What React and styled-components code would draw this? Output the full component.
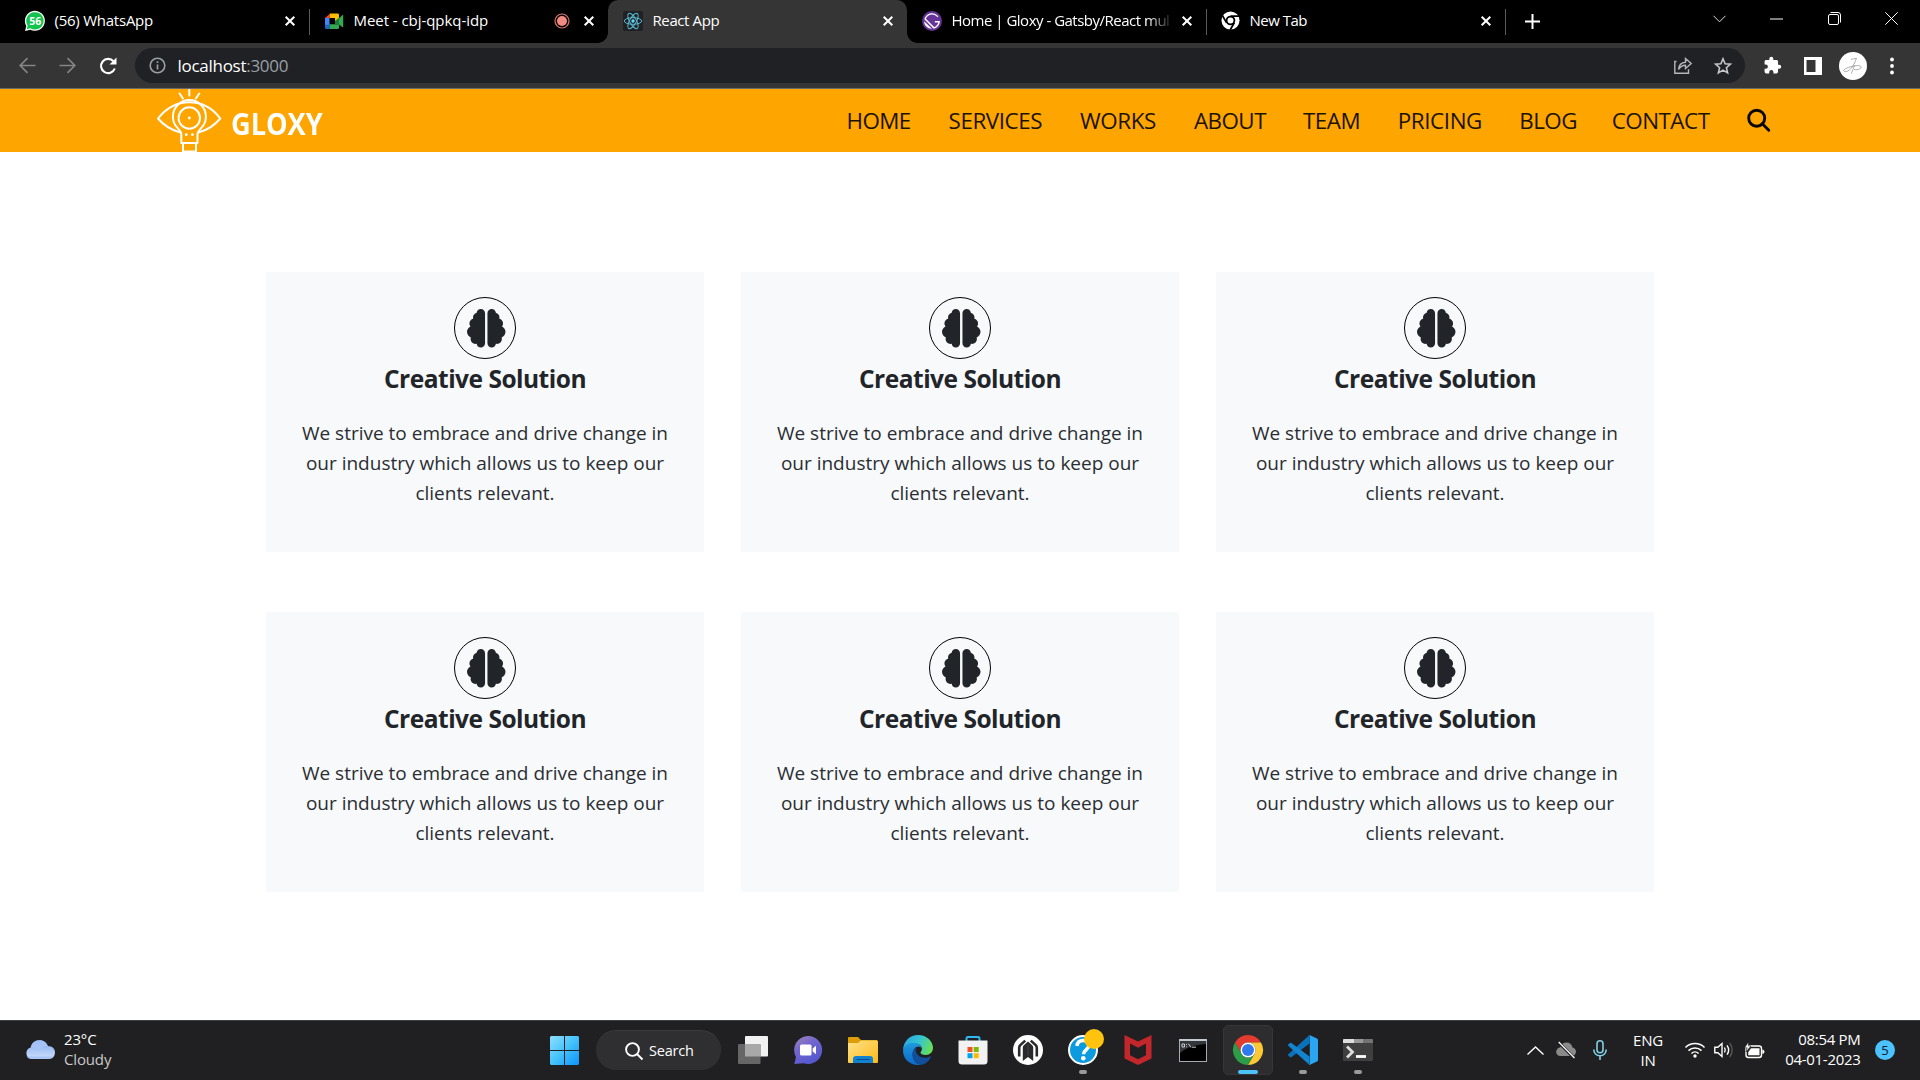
import React from 'react';
import styled, { createGlobalStyle, css } from 'styled-components';
import { FaBrain } from 'react-icons/fa6';

const GlobalStyle = createGlobalStyle`
  *, *::before, *::after { box-sizing: border-box; }
  body { margin: 0; background: #fff; font-family: "Open Sans", "Noto Sans", sans-serif; overflow: hidden; }
  svg { display: block; flex: none; overflow: visible; }
`;

const Screen = styled.div`
  width: 1920px;
  height: 1080px;
  display: flex;
  flex-direction: column;
`;

/* ---------- browser chrome ---------- */

const TabStrip = styled.header`
  display: flex;
  height: 43px;
  padding-left: 10px;
  background: #000;
  color: #fff;
`;

const TabItem = styled.div`
  position: relative;
  display: flex;
  align-items: center;
  width: 299px;
  height: 43px;
  padding: 0 14.5px 2px 15px;
  ${(p) => p.$active && css`
    background: #353535;
    border-radius: 10px 10px 0 0;
    &::before, &::after {
      content: '';
      position: absolute;
      bottom: 0;
      width: 10px;
      height: 10px;
    }
    &::before { left: -10px; background: radial-gradient(circle at 0 0, #000 9.5px, #353535 10px); }
    &::after { right: -10px; background: radial-gradient(circle at 100% 0, #000 9.5px, #353535 10px); }
  `}
  ${(p) => p.$divider && css`
    &::after {
      content: '';
      position: absolute;
      right: -1px;
      top: 9px;
      width: 1px;
      height: 26px;
      background: #5a5a5a;
    }
  `}
`;

const TabTitle = styled.span`
  flex: 1;
  min-width: 0;
  margin: -2px 9px 0 9.5px;
  font-size: 15px;
  line-height: 20px;
  letter-spacing: ${(p) => p.$ls}px;
  white-space: nowrap;
  ${(p) => p.$fade && css`
    mask-image: linear-gradient(90deg, #000 calc(100% - 26px), transparent);
  `}
`;

const TabRecording = styled.span`
  display: flex;
  margin-right: 14px;
`;

const NewTabButton = styled.div`
  display: flex;
  align-items: center;
  justify-content: center;
  width: 54px;
  padding-bottom: 1px;
`;

const WindowButtons = styled.div`
  display: flex;
  align-items: center;
  margin-left: auto;
  padding-bottom: 6px;
  width: 229px;
  justify-content: space-between;
`;

const WindowButton = styled.span`
  display: flex;
  justify-content: center;
  width: 57.25px;
`;

const Toolbar = styled.div`
  display: flex;
  align-items: center;
  height: 46px;
  background: #353535;
  border-bottom: 1px solid #6a6a6a;
`;

const ToolSlot = styled.span`
  display: flex;
  justify-content: center;
  width: ${(p) => p.$w || 40}px;
  flex: none;
`;

const HistoryButtons = styled.div`
  display: flex;
  width: 135px;
  padding-left: 7.5px;
`;

const AddressBar = styled.div`
  display: flex;
  align-items: center;
  width: 1610px;
  height: 35px;
  padding: 0 2.5px 0 14px;
  border-radius: 18px;
  background: #202124;
`;

const Address = styled.span`
  flex: 1;
  margin-left: 11.5px;
  color: #9aa0a6;
  font-size: 17px;
  line-height: 22px;
  letter-spacing: -0.28px;
  b { font-weight: 400; color: #fff; }
`;

const ToolbarActions = styled.div`
  display: flex;
  align-items: center;
  padding-left: 7px;
`;

/* ---------- page ---------- */

const NavBar = styled.nav`
  display: flex;
  height: 63px;
  background: #ffa500;
  overflow: hidden;
`;

const Brand = styled.div`
  display: flex;
  width: 690px;
  margin-left: 155px;
  color: #fff;
`;

const BrandName = styled.span`
  margin: 17px 0 0 8px;
  font-size: 30px;
  line-height: 36px;
  font-weight: 700;
  transform: scaleX(0.905);
  transform-origin: 0 50%;
`;

const NavLinks = styled.div`
  display: flex;
  padding-top: 17px;
  margin-left: 1.5px;
`;

const NavLink = styled.span`
  width: ${(p) => p.$w}px;
  font-size: 22.4px;
  line-height: 30px;
  letter-spacing: ${(p) => p.$ls}px;
  color: #1a1300;
`;

const SearchMark = styled.span`
  display: flex;
  padding-top: 3px;
`;

const Services = styled.main`
  flex: 1;
  display: grid;
  grid-template-columns: repeat(3, 438px);
  grid-auto-rows: 280px;
  gap: 60px 37px;
  align-content: start;
  padding: 120px 0 0 266px;
  background: #fff;
`;

const Card = styled.article`
  display: flex;
  flex-direction: column;
  align-items: center;
  padding-top: 25px;
  background: #f8f9fb;
  color: #212529;
  text-align: center;
`;

const IconRing = styled.div`
  display: flex;
  align-items: center;
  justify-content: center;
  width: 62px;
  height: 62px;
  padding-left: 3px;
  border: 1px solid #000;
  border-radius: 50%;
`;

const CardTitle = styled.h3`
  margin: 4px 0 23px;
  font-size: 24.5px;
  line-height: 32px;
  font-weight: 700;
  letter-spacing: -0.5px;
`;

const CardText = styled.p`
  width: 390px;
  margin: 0;
  font-size: 19px;
  line-height: 30px;
  color: #2a2e32;
`;

/* ---------- taskbar ---------- */

const Taskbar = styled.footer`
  display: flex;
  align-items: center;
  height: 60px;
  border-top: 1px solid #3b3f40;
  background: #202022;
  color: #fff;
  font-size: 15px;
  line-height: 20px;
`;

const Weather = styled.div`
  display: flex;
  align-items: center;
  gap: 9px;
  width: 537px;
  padding: 0 0 2px 25px;
`;

const TwoLines = styled.div`
  display: flex;
  flex-direction: column;
  align-items: ${(p) => p.$align || 'flex-start'};
  width: ${(p) => (p.$w ? `${p.$w}px` : 'auto')};
  margin-top: ${(p) => p.$up ?? -2}px;
  letter-spacing: ${(p) => p.$ls || -0.15}px;
`;

const Muted = styled.span`
  color: #c8c8c8;
`;

const SearchPill = styled.div`
  display: flex;
  align-items: center;
  width: 125px;
  height: 40px;
  margin: 0 4px 1px 4px;
  padding-left: 29px;
  gap: 6px;
  border-radius: 20px;
  background: #2f2f31;
  border-top: 1px solid #3b3b3d;
  font-size: 14.5px;
  letter-spacing: -0.2px;
`;

const AppSlot = styled.div`
  position: relative;
  display: flex;
  align-items: center;
  justify-content: center;
  width: 55px;
  height: 59px;
  padding-bottom: 1px;
`;

const AppButton = styled.div`
  display: flex;
  align-items: center;
  justify-content: center;
  width: 50px;
  height: 50px;
  border-radius: 5px;
  ${(p) => p.$focused && css`
    background: #2d2d2f;
    border: 1px solid #363638;
  `}
`;

const Running = styled.span`
  position: absolute;
  bottom: 6px;
  left: calc(50% - ${(p) => (p.$focused ? 10 : 4)}px);
  width: ${(p) => (p.$focused ? 20 : 8)}px;
  height: 4px;
  border-radius: 2px;
  background: ${(p) => (p.$focused ? '#4cc2ff' : '#9a9a9a')};
`;

const Tray = styled.div`
  display: flex;
  align-items: center;
  margin-left: auto;
  padding: 0 25px 1px 0;
`;

const TraySlot = styled.span`
  display: flex;
  justify-content: center;
  width: ${(p) => p.$w}px;
`;

const CountBadge = styled.span`
  width: 20px;
  height: 20px;
  margin-left: 14.5px;
  border-radius: 50%;
  background: #4cc2ff;
  color: #10202a;
  font-size: 13px;
  text-align: center;
`;

/* ---------- drawings ---------- */

const Cross = () => (
  <svg width="10" height="10" viewBox="0 0 10 10" stroke="#fff" strokeWidth="2" fill="none"><path d="M.7.7l8.6 8.6M9.3.7L.7 9.3" /></svg>
);

const SvgText = styled.text`
  font: 700 ${(p) => p.$size}px "Open Sans", sans-serif;
  text-anchor: middle;
`;

const WhatsAppIcon = () => (
  <svg width="20" height="20" viewBox="0 0 20 20">
    <path d="M0 20l1.3-5A10 10 0 1 1 5.200 18.700z" fill="#fff" />
    <path d="M1.700 18.300l1-3.600A8.700 8.700 0 1 1 5.400 17.300z" fill="#12c34c" />
    <SvgText x="10.200" y="13.800" $size="10.500" fill="#fff">56</SvgText>
  </svg>
);

const MeetIcon = () => (
  <svg width="20" height="20" viewBox="0 0 20 20">
    <path d="M1 7l5-4.500V7z" fill="#ea4335" />
    <path d="M1 7h4.500v7.500H1z" fill="#4285f4" />
    <path d="M1 13.700h4.500V18H2.200Q1 18 1 16.800z" fill="#1967d2" />
    <path d="M5.500 13.300H15V16.700Q15 18 13.700 18H5.500z" fill="#34a853" />
    <path d="M6 2.500h7.700Q15 2.500 15 3.800V9l-4 1V7H6z" fill="#fbbc04" />
    <path d="M11 10.200l4-3.500V14l-4-.5z" fill="#188038" />
    <path d="M15 7.200L18.500 4q.7-.3.7.5v11.300q0 .8-.7.400L15 13.400z" fill="#34a853" />
  </svg>
);

const ReactIcon = () => (
  <svg width="20" height="20" viewBox="0 0 20 20">
    <rect width="20" height="20" rx="2" fill="#202124" />
    <g fill="none" stroke="#58b9d0" strokeWidth="1">
      <ellipse cx="10" cy="10" rx="8.700" ry="3.300" />
      <ellipse cx="10" cy="10" rx="8.700" ry="3.300" transform="rotate(60 10 10)" />
      <ellipse cx="10" cy="10" rx="8.700" ry="3.300" transform="rotate(120 10 10)" />
    </g>
    <circle cx="10" cy="10" r="1.700" fill="#61dafb" />
  </svg>
);

const GatsbyIcon = () => (
  <svg width="20" height="20" viewBox="0 0 28 28">
    <circle cx="14" cy="14" r="14" fill="#639" />
    <path fill="#fff" d="M6.200 21.800C4.100 19.700 3 16.900 3 14.200L13.900 25c-2.800-.1-5.600-1.100-7.700-3.200zm10.200 2.900L3.300 11.600C4.400 6.700 8.800 3 14 3c3.700 0 6.900 1.800 8.900 4.500l-1.500 1.300C19.700 6.500 17 5 14 5c-3.900 0-7.200 2.500-8.500 6L17 22.500c2.900-1 5.100-3.500 5.800-6.500H18v-2h7c0 5.200-3.700 9.600-8.600 10.700z" />
  </svg>
);

const ChromeMonoIcon = () => (
  <svg width="19" height="19" viewBox="0 0 20 20">
    <circle cx="10" cy="10" r="9.500" fill="#fff" />
    <circle cx="10" cy="10" r="4.100" fill="#fff" stroke="#000" strokeWidth="1.900" />
    <path d="M10 5.300h9M5.900 12.500L1.600 5M14 12.400L9.600 20" stroke="#000" strokeWidth="1.800" />
  </svg>
);

const RecordingIcon = () => (
  <svg width="16" height="16" viewBox="0 0 16 16"><circle cx="8" cy="8" r="5" fill="#f28b82" /><circle cx="8" cy="8" r="7" fill="none" stroke="#d8766d" strokeWidth="1.200" /></svg>
);

const GloxyMark = () => (
  <svg width="68" height="63" viewBox="155 89 68 63" fill="none" stroke="#fff" strokeWidth="2" strokeLinecap="round" strokeLinejoin="round">
    <path d="M189.300 89v6.500M179.600 93.500l3.300 5M199.300 93.500l-3.500 5" />
    <path d="M180.500 132.500c-9-2.300-17-7.500-22.500-14 8-10.200 18.500-16.300 31.300-16.300s23.500 6.100 31 16.300c-5.400 6.500-13 11.700-22 14" />
    <path d="M181.300 143v-8.800c0-2.400-1.400-3.600-3.400-5.800a16.500 16.500 0 1 1 23 0c-2 2.200-3.400 3.400-3.400 5.800v8.800z" />
    <circle cx="189.300" cy="118" r="10.700" />
    <path d="M183 143.500v8h13v-8" />
    <g fill="#fff" stroke="none"><circle cx="189.300" cy="118" r="1.400" /><circle cx="186.200" cy="134.700" r="1.400" /><circle cx="192.400" cy="134.700" r="1.400" /></g>
  </svg>
);

const WeatherIcon = () => (
  <svg width="30" height="19" viewBox="0 0 30 19">
    <defs><linearGradient id="cloud" x1="0" y1="0" x2="0" y2="1"><stop offset="0" stopColor="#7ea9ee" /><stop offset="1" stopColor="#cfdffb" /></linearGradient></defs>
    <path d="M6 19a6 6 0 0 1-.3-11.600C6.600 3 10 0 14.400 0c4.300 0 7.300 2.500 8.400 6.100C27 6 30 8.800 30 12.500S27.300 19 23.700 19z" fill="url(#cloud)" />
    <path d="M5.700 7.400c4-.8 7 .8 8.500 3 1.500-2.400 4.300-4.500 8.600-4.300C21.500 2.500 18.400.5 14.400.5c-4.300 0-7.500 2.600-8.700 6.900z" fill="#a9c6f8" opacity=".8" />
    <path d="M1.500 16.500h27c-1 1.600-2.600 2.500-4.700 2.500H6c-2 0-3.600-1-4.500-2.500z" fill="#92b5f2" opacity=".6" />
  </svg>
);

const StartIcon = () => (
  <svg width="29" height="29" viewBox="0 0 29 29">
    <defs><linearGradient id="start" gradientUnits="userSpaceOnUse" x1="0" y1="0" x2="29" y2="29"><stop offset="0" stopColor="#8ce0fd" /><stop offset=".5" stopColor="#45c2fb" /><stop offset="1" stopColor="#0a93fa" /></linearGradient></defs>
    <path fill="url(#start)" d="M1 0h13v14H0V1zM15 0h13l1 1v13H15zM0 15h14v14H1l-1-1zM15 15h14v13l-1 1H15z" />
  </svg>
);

const SearchIcon = () => (
  <svg width="18" height="18" viewBox="0 0 18 18" fill="none" stroke="#fff" strokeWidth="1.900"><circle cx="7.500" cy="7.500" r="6.400" /><path d="M12 12l5.500 5.500" /></svg>
);

const TaskViewIcon = () => (
  <svg width="30" height="28" viewBox="0 0 30 28">
    <rect x="7" width="23" height="20.500" rx="1" fill="#f1f1f1" />
    <rect y="8" width="22.500" height="20" rx="1" fill="#666" />
    <rect x="7" y="8" width="15.500" height="12.500" fill="#a8a8a8" />
  </svg>
);

const ChatIcon = () => (
  <svg width="28" height="28" viewBox="0 0 28 28">
    <defs><linearGradient id="chat" x1="0" y1="0" x2=".6" y2="1"><stop offset="0" stopColor="#a384b4" /><stop offset=".45" stopColor="#7166cf" /><stop offset="1" stopColor="#5457cf" /></linearGradient></defs>
    <path d="M14 0a14 14 0 1 1-4.500 27.200L.3 28 2 21A14 14 0 0 1 14 0z" fill="url(#chat)" />
    <rect x="6" y="8.500" width="11.500" height="11" rx="1.500" fill="#fff" /><path d="M18.700 12.500l3.300-2.800v8.600l-3.300-2.800z" fill="#fff" />
  </svg>
);

const ExplorerIcon = () => (
  <svg width="30" height="26" viewBox="0 0 30 26">
    <defs><linearGradient id="folder" x1="0" y1="0" x2="1" y2="1"><stop offset="0" stopColor="#ffe08a" /><stop offset="1" stopColor="#fbbb16" /></linearGradient></defs>
    <path d="M0 1q0-1 1-1h9l3 3h16v8H0z" fill="#dd9d08" />
    <path d="M0 6h10l3-2.500h16q1 0 1 1V25q0 1-1 1H1q-1 0-1-1z" fill="url(#folder)" />
    <path d="M5 26v-4q0-3 3-3h14q3 0 3 3v4z" fill="#1181d2" /><path d="M8.500 22.500h13" stroke="#0a4b8b" strokeWidth="1" />
  </svg>
);

const EdgeIcon = () => (
  <svg width="30" height="30" viewBox="0 0 30 30">
    <defs>
      <linearGradient id="edgeTop" x1="0" y1=".3" x2="1" y2=".6"><stop offset="0" stopColor="#2ba7de" /><stop offset=".5" stopColor="#34c4d2" /><stop offset="1" stopColor="#6be052" /></linearGradient>
      <linearGradient id="edgeLow" x1="0" y1="0" x2="0" y2="1"><stop offset="0" stopColor="#2098dd" /><stop offset="1" stopColor="#0b69c7" /></linearGradient>
    </defs>
    <path d="M.1 14.500C.6 6 7 0 15 0c9 0 15 6.500 15 12.800 0 4.200-3.200 7.200-7.200 7.200-3.300 0-5.300-1.100-5.300-2.300 0-1 1.400-1.400 1.400-3.900 0-3-2.700-5-6.400-5C6.500 8.800 2 11 .1 14.500z" fill="url(#edgeTop)" />
    <path d="M.1 14.500C1.500 10.500 5 8 9.500 8c4.700 0 9 2 9.400 5.800-.6-1.600-2-2.300-3.300-2.300-3.300 0-6 3.300-6 8 0 5.500 4 9.700 8.400 10.200C7.500 31.500-.7 24 .1 14.500z" fill="url(#edgeLow)" />
    <path d="M9.600 19.500c0-3.400 1.500-6.300 3.800-7.500-2 3.300.3 10.500 8.100 10.700 2.500 0 4.200-.7 5.500-1.300.7-.3 1 .2.700.8C25.700 26.500 22 29.700 18 29.700c-5-.5-8.400-5-8.400-10.200z" fill="#114f9c" />
  </svg>
);

const StoreIcon = () => (
  <svg width="30" height="30" viewBox="0 0 30 30">
    <path d="M8.500 7V3.500Q8.500 2 10 2h10q1.500 0 1.500 1.500V7" fill="none" stroke="#2fb9f0" strokeWidth="2" />
    <path d="M.5 5.500h29V26q0 3.500-3.500 3.500H4Q.5 29.500.5 26z" fill="#f2f2f2" />
    <path d="M9.500 12h5v5h-5z" fill="#f25022" /><path d="M15.700 12h5v5h-5z" fill="#7fba00" /><path d="M9.500 18.200h5v5h-5z" fill="#00a4ef" /><path d="M15.700 18.200h5v5h-5z" fill="#ffb900" />
  </svg>
);

const RibbonIcon = () => (
  <svg width="30" height="30" viewBox="0 0 30 30">
    <circle cx="15" cy="15" r="15" fill="#fff" />
    <path d="M9.800 26V12.500q0-1.300 1-2.300L15 6.500l4.200 3.700q1 1 1 2.300V26L15 22z" fill="#2a2a2c" />
    <path d="M6.200 21.500v-8.800q0-1.500 1.100-2.600L12.200 5.600M23.800 21.500v-8.800q0-1.500-1.100-2.600L17.800 5.600" fill="none" stroke="#2a2a2c" strokeWidth="2.600" />
    <path d="M15 9.500v11" stroke="#4a4a4c" strokeWidth=".8" />
  </svg>
);

const HelpIcon = () => (
  <svg width="30" height="30" viewBox="0 0 30 30">
    <circle cx="15" cy="15" r="14" fill="#0d9be0" stroke="#fff" strokeWidth="2" />
    <path d="M9 11c.3-4 3.300-5.500 6.200-5.500 3.300 0 5.700 1.800 5.700 4.900 0 4.200-5.400 4.200-5.400 8.800" fill="none" stroke="#fff" strokeWidth="3.500" />
    <circle cx="15.300" cy="23.300" r="2.300" fill="#fff" />
    <circle cx="26" cy="4" r="10" fill="#ffc20e" />
  </svg>
);

const ShieldIcon = () => (
  <svg width="28" height="30" viewBox="0 0 28 30">
    <path d="M.5 0L14 6.500 27.500 0v23.500L14 30 .5 23.500z" fill="#c3262b" />
    <path d="M6 8.500l8 4.200 8-4.200v11.800l-8 4-8-4z" fill="#202022" />
  </svg>
);

const CmdIcon = () => (
  <svg width="28" height="23" viewBox="0 0 28 23">
    <rect x=".5" y=".5" width="27" height="22" fill="#000" stroke="#a7abb3" />
    <path d="M1 1h26v4C16 6 8 8 1 14z" fill="#34363a" /><path d="M.5 1h27" stroke="#c6cad1" strokeWidth="2" />
    <path d="M3 5h2.500v3H3zM7.500 5v1M7.500 7.500v.8M9.500 4.700l2.500 3.800M13 8.200h4" fill="none" stroke="#ddd" strokeWidth=".9" />
  </svg>
);

const ChromeIcon = () => (
  <svg width="30" height="30" viewBox="0 0 30 30">
    <path d="M2 7.500A15 15 0 0 1 28 7.500H15a7.500 7.500 0 0 0-6.500 11.200z" fill="#e33b2e" />
    <path d="M28 7.500A15 15 0 0 1 15 30l6.500-11.300A7.500 7.500 0 0 0 15 7.500z" fill="#fcc934" />
    <path d="M2 7.500l6.500 11.200a7.500 7.500 0 0 0 13 0L15 30A15 15 0 0 1 2 7.500z" fill="#2d9c48" />
    <circle cx="15" cy="15" r="7.500" fill="#fff" /><circle cx="15" cy="15" r="6" fill="#2f7bed" />
  </svg>
);

const CodeIcon = () => (
  <svg width="30" height="30" viewBox="0 0 30 30">
    <path d="M0 19.500L21.500 0v8.500L3.500 22q-.8.600-1.500 0L.2 20.600z" fill="#0a72bd" />
    <path d="M0 10.500L21.500 30v-8.500L3.500 8q-.8-.6-1.500 0L.2 9.400z" fill="#1384cf" />
    <path d="M21.500 0L29 3.500q1 .5 1 1.600v19.800q0 1.100-1 1.600L21.500 30q-.7 0-1.200-.6 1.500.8 1.500-1V1.600q0-1.800-1.500-1z" fill="#2aa5f1" />
  </svg>
);

const TerminalIcon = () => (
  <svg width="30" height="22" viewBox="0 0 30 22">
    <rect width="30" height="22" rx="1" fill="#3f3f3f" />
    <path d="M0 4V1q0-1 1-1h10v4z" fill="#ddd" /><path d="M11 0h9v4h-9z" fill="#999" /><path d="M20 0h9q1 0 1 1v3H20z" fill="#737373" />
    <path d="M4 7.500l5.500 5.500L4 18.500" fill="none" stroke="#ddd" strokeWidth="2.800" /><path d="M13 17.500h10" stroke="#fff" strokeWidth="2.800" />
  </svg>
);

/* ---------- data ---------- */

const tabs = [
  { title: '(56) WhatsApp', ls: -0.24, icon: <WhatsAppIcon />, divider: true },
  { title: 'Meet - cbj-qpkq-idp', ls: -0.05, icon: <MeetIcon />, recording: true },
  { title: 'React App', ls: -0.4, icon: <ReactIcon />, active: true },
  { title: 'Home | Gloxy - Gatsby/React mul', ls: -0.5, icon: <GatsbyIcon />, fade: true, divider: true },
  { title: 'New Tab', ls: -0.5, icon: <ChromeMonoIcon />, divider: true },
];

const links = [
  ['HOME', 102.1, -0.6], ['SERVICES', 131.5, -0.45], ['WORKS', 113.9, -0.45], ['ABOUT', 108.9, -0.55],
  ['TEAM', 94.9, -0.45], ['PRICING', 121.6, -0.4], ['BLOG', 92.3, -0.6], ['CONTACT', 134.9, -0.5],
];

const apps = [
  { icon: <TaskViewIcon /> },
  { icon: <ChatIcon /> },
  { icon: <ExplorerIcon /> },
  { icon: <EdgeIcon /> },
  { icon: <StoreIcon /> },
  { icon: <RibbonIcon /> },
  { icon: <HelpIcon />, running: true },
  { icon: <ShieldIcon /> },
  { icon: <CmdIcon /> },
  { icon: <ChromeIcon />, running: true, focused: true },
  { icon: <CodeIcon />, running: true },
  { icon: <TerminalIcon />, running: true },
];

function Browser() {
  return (
    <>
      <TabStrip>
        {tabs.map((t) => (
          <TabItem key={t.title} $active={t.active} $divider={t.divider}>
            {t.icon}
            <TabTitle $ls={t.ls} $fade={t.fade}>{t.title}</TabTitle>
            {t.recording && <TabRecording><RecordingIcon /></TabRecording>}
            <Cross />
          </TabItem>
        ))}
        <NewTabButton>
          <svg width="15" height="15" viewBox="0 0 15 15" stroke="#fff" strokeWidth="2"><path d="M7.500 0v15M0 7.500h15" /></svg>
        </NewTabButton>
        <WindowButtons>
          <WindowButton><svg width="13" height="8" viewBox="0 0 13 8" fill="none" stroke="#ddd"><path d="M.5.800l6 6 6-6" /></svg></WindowButton>
          <WindowButton><svg width="13" height="2" viewBox="0 0 13 2"><path d="M0 .5h13v1H0z" fill="#fff" /></svg></WindowButton>
          <WindowButton><svg width="13" height="13" viewBox="0 0 13 13" fill="none" stroke="#fff"><rect x=".5" y="2.500" width="10" height="10" rx="1.500" /><path d="M2.500.5h7.500q2.500 0 2.500 2.500v7.500" /></svg></WindowButton>
          <WindowButton><svg width="13" height="13" viewBox="0 0 13 13" stroke="#fff"><path d="M.3.300l12.400 12.400M12.700.300L.3 12.700" /></svg></WindowButton>
        </WindowButtons>
      </TabStrip>
      <Toolbar>
        <HistoryButtons>
          <ToolSlot><svg width="17" height="17" viewBox="0 0 17 17" fill="none" stroke="#858585" strokeWidth="1.700"><path d="M16.500 8.500H1.500M8.500 1.200L1.200 8.500l7.300 7.300" /></svg></ToolSlot>
          <ToolSlot><svg width="17" height="17" viewBox="0 0 17 17" fill="none" stroke="#858585" strokeWidth="1.700"><path d="M.5 8.500h15M8.500 1.200l7.300 7.300-7.300 7.300" /></svg></ToolSlot>
          <ToolSlot><svg width="18" height="18" viewBox="0 0 18 18" fill="none" stroke="#fff" strokeWidth="2.100"><path d="M15.800 11.500A7.100 7.100 0 1 1 14.500 4.300" /><path d="M17.500.5v7h-7z" fill="#fff" stroke="none" /></svg></ToolSlot>
        </HistoryButtons>
        <AddressBar>
          <svg width="17" height="17" viewBox="0 0 17 17"><circle cx="8.500" cy="8.500" r="7.300" fill="none" stroke="#9aa0a6" strokeWidth="1.600" /><path d="M8.500 4.300v1.800M8.500 7.500v5" stroke="#9aa0a6" strokeWidth="1.700" /></svg>
          <Address><b>localhost</b>:3000</Address>
          <ToolSlot>
            <svg width="18" height="17" viewBox="0 0 18 17" fill="none" stroke="#b4b6b9" strokeWidth="1.400"><path d="M2.500 4.500H.8v11.700h13.700v-4" /><path d="M4.500 12.500c.3-4.500 2.800-7 7-7.300V1.500l5.700 5-5.700 5V8.200c-3.200 0-5.300 1.500-7 4.300z" /></svg>
          </ToolSlot>
          <ToolSlot>
            <svg width="18" height="18" viewBox="0 0 18 18" fill="none" stroke="#c4c6c9" strokeWidth="1.600"><path d="M9 1.800l2.100 4.900 5.300.5-4 3.500 1.200 5.200L9 13.100l-4.600 2.800 1.200-5.200-4-3.500 5.300-.5z" /></svg>
          </ToolSlot>
        </AddressBar>
        <ToolbarActions>
          <ToolSlot><svg width="19" height="19" viewBox="0 0 24 24" fill="#fff"><path d="M20.500 11H19V7c0-1.100-.9-2-2-2h-4V3.500a2.500 2.500 0 0 0-5 0V5H4c-1.100 0-2 .9-2 2v3.800h1.500a2.700 2.700 0 0 1 0 5.400H2V20c0 1.100.9 2 2 2h3.800v-1.500a2.700 2.700 0 0 1 5.400 0V22H17c1.100 0 2-.9 2-2v-4h1.500a2.500 2.500 0 0 0 0-5z" /></svg></ToolSlot>
          <ToolSlot $w="41"><svg width="18" height="18" viewBox="0 0 18 18"><path d="M0 0h18v18H0z" fill="#fff" /><path d="M2.500 3h9v12h-9z" fill="#353535" /></svg></ToolSlot>
          <ToolSlot>
            <svg width="28" height="28" viewBox="0 0 28 28"><circle cx="14" cy="14" r="14" fill="#fff" /><path d="M12 7.500c1.500-.5 3.500-1 5.500-1.200-1.500 4-4 9.500-7.500 12-2.500 1.800-5 1.500-5.500.3 1-2.300 8-4.500 13-5 4.500-.3 6 1.500 3.500 3-2 1.200-4 1.500-6 .8M15.500 13.500l-3.200 8" fill="none" stroke="#8a8a8a" strokeWidth=".7" /></svg>
          </ToolSlot>
          <ToolSlot $w="38"><svg width="4" height="18" viewBox="0 0 4 18" fill="#fff"><circle cx="2" cy="2.500" r="1.900" /><circle cx="2" cy="9" r="1.900" /><circle cx="2" cy="15.500" r="1.900" /></svg></ToolSlot>
        </ToolbarActions>
      </Toolbar>
    </>
  );
}

function Site() {
  return (
    <>
      <NavBar>
        <Brand><GloxyMark /><BrandName>GLOXY</BrandName></Brand>
        <NavLinks>
          {links.map(([label, w, ls]) => <NavLink key={label} $w={w} $ls={ls}>{label}</NavLink>)}
          <SearchMark>
            <svg width="24" height="24" viewBox="0 0 24 24" fill="none" stroke="#0a0800" strokeWidth="2.900"><circle cx="9.700" cy="9.200" r="8" /><path d="M15.300 14.800l6.500 6.500" strokeLinecap="round" /></svg>
          </SearchMark>
        </NavLinks>
      </NavBar>
      <Services>
        {Array.from({ length: 6 }, (_, i) => (
          <Card key={i}>
            <IconRing><FaBrain size={38.5} color="#212529" /></IconRing>
            <CardTitle>Creative Solution</CardTitle>
            <CardText>We strive to embrace and drive change in our industry which allows us to keep our clients relevant.</CardText>
          </Card>
        ))}
      </Services>
    </>
  );
}

function SystemBar() {
  return (
    <Taskbar>
      <Weather>
        <WeatherIcon />
        <TwoLines><span>23°C</span><Muted>Cloudy</Muted></TwoLines>
      </Weather>
      <AppSlot><StartIcon /></AppSlot>
      <SearchPill><SearchIcon />Search</SearchPill>
      {apps.map((a, i) => (
        <AppSlot key={i}>
          <AppButton $focused={a.focused}>{a.icon}</AppButton>
          {a.running && <Running $focused={a.focused} />}
        </AppSlot>
      ))}
      <Tray>
        <TraySlot $w="30"><svg width="17" height="9" viewBox="0 0 17 9" fill="none" stroke="#fff" strokeWidth="1.400"><path d="M.5 8.500l8-7.500 8 7.500" /></svg></TraySlot>
        <TraySlot $w="30"><svg width="20" height="16" viewBox="0 0 20 16"><path d="M4.500 14a4.200 4.200 0 0 1-.3-8.400C5 2.300 7.500.5 10.500.5c3.300 0 5.500 2 6 5 2 .3 3.500 2 3.500 4.200S18.200 14 16 14z" fill="#8a8a8a" /><path d="M2.300 0L18 16" stroke="#202022" strokeWidth="3" /><path d="M2.700 0L18.500 16" stroke="#fff" strokeWidth="1.200" /></svg></TraySlot>
        <TraySlot $w="39"><svg width="14" height="20" viewBox="0 0 14 20" fill="none" stroke="#7fd0e4" strokeWidth="1.600"><rect x="4" y=".8" width="6" height="12" rx="3" /><path d="M.8 9.500c0 3.500 2.500 6.300 6.200 6.300s6.200-2.800 6.200-6.300M7 16v4" /></svg></TraySlot>
        <TwoLines $align="center" $w="57" $up={0}><span>ENG</span><span>IN</span></TwoLines>
        <TraySlot $w="37"><svg width="20" height="16" viewBox="0 0 20 16" fill="none" stroke="#fff" strokeWidth="1.500"><path d="M.5 5.500a13.300 13.300 0 0 1 19 0M3.500 8.600a9.200 9.200 0 0 1 13 0M6.400 11.500a5.200 5.200 0 0 1 7.200 0" /><circle cx="10" cy="14" r="1.700" fill="#fff" stroke="none" /></svg></TraySlot>
        <TraySlot $w="21"><svg width="20" height="16" viewBox="0 0 20 16" fill="none" stroke="#fff" strokeWidth="1.400"><path d="M.8 5.300h3L8 1.500v13l-4.200-3.800h-3zM10.500 5.500q1.500 2.500 0 5M13 3.300q3.300 4.700 0 9.400" /><path d="M15.700 1q5 7 0 14" stroke="#555" /></svg></TraySlot>
        <TraySlot $w="40"><svg width="21" height="17" viewBox="0 0 21 17"><rect x="2" y="4" width="15.500" height="11.500" rx="2.500" fill="none" stroke="#fff" strokeWidth="1.400" /><path d="M7 6.200h8.500v7H4.200v-3z" fill="#fff" /><path d="M18.300 7.500q2.200.2 2.200 2.200t-2.200 2.200z" fill="#fff" /><path d="M4.500 0L.5 5.800h2.700L2 10l5-6H4.400z" fill="#fff" stroke="#202022" strokeWidth=".6" /></svg></TraySlot>
        <TwoLines $align="flex-end" $w="86" $ls={-0.3} $up={-3}><span>08:54 PM</span><span>04-01-2023</span></TwoLines>
        <CountBadge>5</CountBadge>
      </Tray>
    </Taskbar>
  );
}

export default function App() {
  return (
    <Screen>
      <GlobalStyle />
      <Browser />
      <Site />
      <SystemBar />
    </Screen>
  );
}
